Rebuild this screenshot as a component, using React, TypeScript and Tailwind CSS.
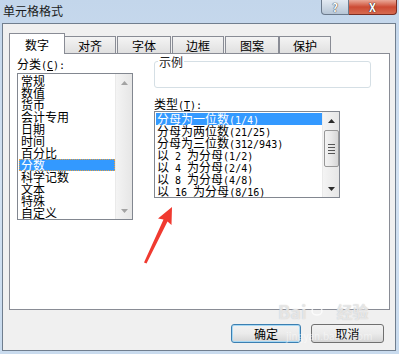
import React from "react";

const categories = ["常规", "数值", "货币", "会计专用", "日期", "时间", "百分比", "分数", "科学记数", "文本", "特殊", "自定义"];
const types = ["分母为一位数(1/4)", "分母为两位数(21/25)", "分母为三位数(312/943)", "以 2 为分母(1/2)", "以 4 为分母(2/4)", "以 8 为分母(4/8)", "以 16 为分母(8/16)"];

const tabs = [
  { label: "数字", className: "w-[56px]" },
  { label: "对齐", className: "w-[51px]" },
  { label: "字体", className: "w-[54px] ml-[1px]" },
  { label: "边框", className: "w-[52px] ml-[1px]" },
  { label: "图案", className: "w-[54px] ml-[1px]" },
  { label: "保护", className: "w-[52px]" },
];

// half-width runs get a 6px-wide mono face, like the dialog's bitmap font
const Mixed = ({ text }: { text: string }) => (
  <>
    {text.split(/([\x20-\x7e]+)/).map((part, i) =>
      /^[\x20-\x7e]+$/.test(part) ? (
        <span key={i} className="font-['DejaVu_Sans_Mono',monospace] text-[10px]">
          {part}
        </span>
      ) : (
        <span key={i}>{part}</span>
      )
    )}
  </>
);

const Arrow = ({ up, color }: { up?: boolean; color: string }) => (
  <svg width="7" height="4" viewBox="0 0 7 4">
    <polygon points={up ? "3.5,0 7,4 0,4" : "0,0 7,0 3.5,4"} fill={color} />
  </svg>
);

const Scrollbar = ({ thumb }: { thumb?: boolean }) => (
  <div className="flex w-[17px] flex-col items-center bg-gradient-to-r from-[#f4f4f4] to-[#e6e6e6] border-l border-[#eaeaea]">
    <div className="flex h-[17px] items-center justify-center">
      <Arrow up color={thumb ? "#2b2b2b" : "#a3a3a3"} />
    </div>
    {thumb && (
      <div className="mt-[1px] flex h-[37px] w-[15px] flex-col items-center justify-center gap-[2px] rounded-[2px] border border-[#979797] bg-gradient-to-r from-[#f3f3f3] via-[#e8e8e8] to-[#d6d6d6]">
        <div className="h-[1px] w-[7px] bg-[#555]" />
        <div className="h-[1px] w-[7px] bg-[#555]" />
        <div className="h-[1px] w-[7px] bg-[#555]" />
        <div className="h-[1px] w-[7px] bg-[#555]" />
      </div>
    )}
    <div className="flex-1" />
    <div className="flex h-[17px] items-center justify-center">
      <Arrow color={thumb ? "#2b2b2b" : "#a3a3a3"} />
    </div>
  </div>
);

export default function App() {
  return (
    <div className="relative flex h-[354px] w-[399px] flex-col overflow-hidden bg-gradient-to-b from-[#c3d6eb] via-[#d3e2f2] to-[#c9dbee] font-['Noto_Sans_CJK_SC',sans-serif] text-[12px] leading-[12px] text-black">
      {/* title bar */}
      <div className="flex h-[23px] items-start">
        <div className="pl-[3px] pt-[4px] text-[12px] leading-[13px] text-[#1b1b1b]">单元格格式</div>
        <div className="flex-1" />
        <div className="flex h-[15px] w-[28px] items-center justify-center rounded-bl-[4px] border border-t-0 border-[#6b7a8c] bg-gradient-to-b from-[#e3eaf2] to-[#b7c6d6] pt-[1px] text-[11px] font-bold leading-[11px] text-white [text-shadow:0_0_1px_#333,0_0_1px_#333]">
          ?
        </div>
        <div className="mr-[2px] flex h-[15px] w-[48px] items-center justify-center rounded-br-[4px] border border-l-0 border-t-0 border-[#7a2d22] bg-gradient-to-b from-[#e9a898] via-[#cc4a33] to-[#d66a50] pt-[1px] text-[11px] font-bold leading-[11px] text-white [text-shadow:0_0_1px_#222,0_0_1px_#222]">
          X
        </div>
      </div>

      {/* dialog body */}
      <div className="mb-[3px] ml-[2px] mr-[3px] flex flex-1 flex-col border border-[#707e8e] bg-[#f0f0f0]">
        {/* tabs */}
        <div className="ml-[6px] mt-[9px] flex h-[20px] items-end">
          {tabs.map((t, i) =>
            i === 0 ? (
              <div key={t.label} className={`relative z-10 -mb-[1px] flex h-[21px] items-start justify-center border border-b-0 border-[#898c95] bg-white pt-[5px] ${t.className}`}>
                {t.label}
              </div>
            ) : (
              <div key={t.label} className={`flex h-[17px] items-start justify-center border border-b-0 border-[#898c95] bg-gradient-to-b from-[#f4f4f4] to-[#e0e0e0] pt-[3px] ${t.className} ${i === 1 ? "border-l-0" : ""}`}>
                {t.label}
              </div>
            )
          )}
        </div>

        {/* panel */}
        <div className="ml-[6px] flex h-[257px] w-[381px] border border-[#898c95] bg-white">
          <div className="ml-[7px] flex flex-col pt-[3px]">
            <div className="h-[13px] leading-[13px]">
              分类<span className="font-['DejaVu_Sans_Mono',monospace] text-[10px]">(<u>C</u>):</span>
            </div>
            <div className="mt-[3px] flex h-[147px] w-[116px] border border-[#828790] bg-white">
              <div className="flex-1 pl-[1px] pt-[1px]">
                {categories.map((c) =>
                  c === "分数" ? (
                    <div key={c} className="h-[12px] border border-dotted border-[#e8a040] bg-[#3399ff] pl-[1px] leading-[10px] text-white">
                      {c}
                    </div>
                  ) : (
                    <div key={c} className="h-[12px] pl-[2px]">
                      {c}
                    </div>
                  )
                )}
              </div>
              <Scrollbar />
            </div>
          </div>

          <div className="ml-[21px] flex flex-col pt-[1px]">
            <fieldset className="h-[33px] w-[217px] rounded-[3px] border border-[#d5dfe5]">
              <legend className="ml-[3px] px-[1px] leading-[13px] text-[#222]">示例</legend>
            </fieldset>
            <div className="mt-[9px] h-[13px] leading-[13px]">
              类型<span className="font-['DejaVu_Sans_Mono',monospace] text-[10px]">(<u>T</u>):</span>
            </div>
            <div className="mt-[1px] flex h-[87px] w-[186px] border border-[#828790] bg-white">
              <div className="flex-1 pl-[1px] pt-[1px]">
                {types.map((t, i) => (
                  <div key={t} className={`h-[12px] whitespace-pre pl-[1px] ${i === 0 ? "bg-[#3399ff] text-white" : ""}`}>
                    <Mixed text={t} />
                  </div>
                ))}
              </div>
              <Scrollbar thumb />
            </div>
          </div>
        </div>

        {/* buttons */}
        <div className="mr-[11px] mt-[14px] flex justify-end gap-[10px]">
          <button className="flex h-[19px] w-[70px] items-center justify-center rounded-[3px] border border-[#3c7fb1] bg-gradient-to-b from-[#f2f2f2] via-[#ebebeb] to-[#d6d6d6] shadow-[inset_0_0_0_1px_#a6d8f4]">
            确定
          </button>
          <button className="flex h-[19px] w-[73px] items-center justify-center rounded-[3px] border border-[#707070] bg-gradient-to-b from-[#f2f2f2] via-[#ebebeb] to-[#d6d6d6]">
            取消
          </button>
        </div>
      </div>

      {/* red annotation arrow */}
      <svg className="absolute left-0 top-0" width="399" height="354">
        <polygon points="172,207 171.5,225 167.5,221.5 146.5,263.5 144,262.5 163.5,219.5 158,218.5" fill="#f03a30" />
      </svg>

      {/* watermark */}
      <div className="pointer-events-none absolute left-[278px] top-[298px] flex flex-col items-start text-white/60">
        <div className="flex items-end text-[18px] font-bold leading-[20px] [text-shadow:0_0_1px_#bbb]">
          <span>Bai</span>
          <svg width="20" height="20" viewBox="0 0 20 20" className="mx-[1px] mb-[3px]">
            <g fill="none" stroke="#ffffff" strokeOpacity="0.75" strokeWidth="1.5">
              <ellipse cx="10" cy="13" rx="5" ry="4" />
              <circle cx="4" cy="7" r="2" />
              <circle cx="8" cy="3.5" r="2" />
              <circle cx="12.5" cy="3.5" r="2" />
              <circle cx="16.5" cy="7" r="2" />
            </g>
          </svg>
          <span className="ml-[8px] text-[16px]">经验</span>
        </div>
        <div className="ml-[8px] mt-[10px] text-[10px] leading-[10px] text-white/50">jingyan.baidu.com</div>
      </div>
    </div>
  );
}
